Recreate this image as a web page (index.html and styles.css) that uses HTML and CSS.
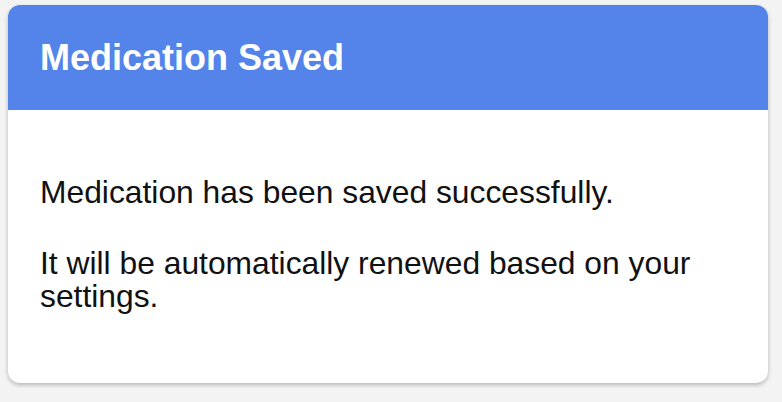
FILE: index.html
```html
<!DOCTYPE html>
<html>
<head>
<title>Medication Saved</title>
<link rel="stylesheet" href="styles.css">
</head>
<body>
  <div class="card">
    <div class="card-header">
      <h2>Medication Saved</h2>
    </div>
    <div class="card-body">
      <p>Medication has been saved successfully.</p>
      <p>It will be automatically renewed based on your settings.</p>
    </div>
  </div>
</body>
</html>
```
FILE: styles.css
```css
body {
  margin: 0;
  padding: 5px 8px;
  background-color: #f3f3f3;
  font-family: "Liberation Sans", Arial, sans-serif;
}
.card {
  width: 760px;
  background-color: #fff;
  border-radius: 12px;
  overflow: hidden;
  box-shadow: 0 2px 4px rgba(0, 0, 0, 0.25);
}
.card-header {
  background-color: #5484e9;
  padding: 32px;
}
.card-header h2 {
  margin: 0;
  color: #fff;
  font-size: 36px;
  line-height: 41px;
}
.card-body {
  padding: 66px 32px 70px;
  color: #111;
  font-size: 31.8px;
  line-height: 33px;
}
.card-body p {
  margin: 0 0 38px;
}
.card-body p:last-child {
  margin-bottom: 0;
}
```
